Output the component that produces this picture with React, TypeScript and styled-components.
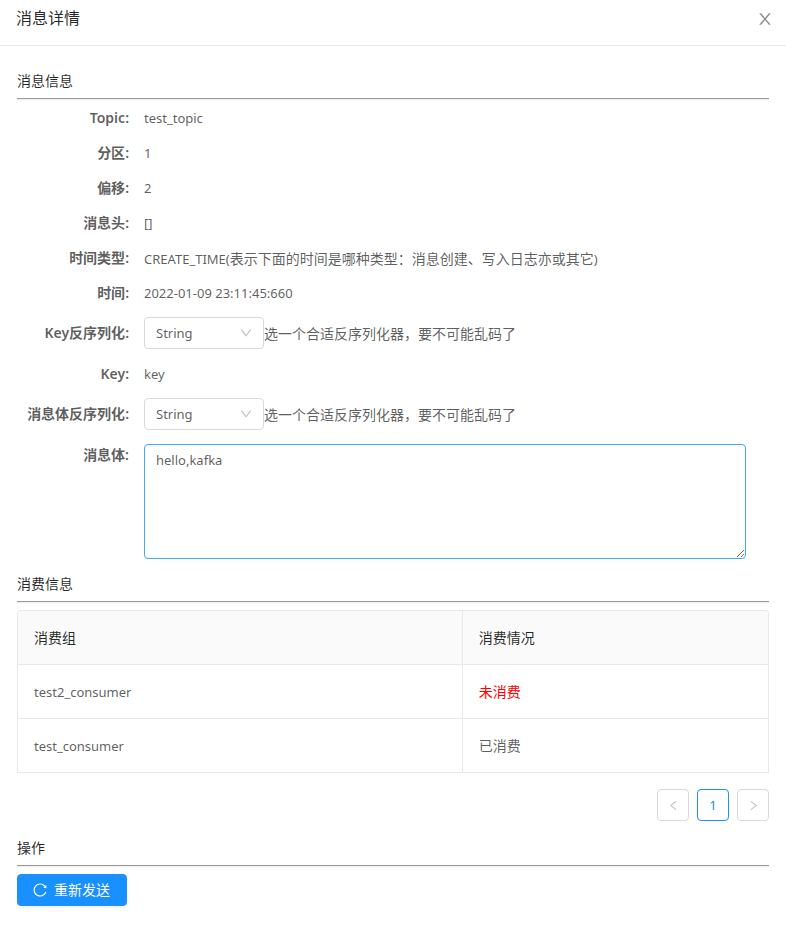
import React from "react";
import styled, { createGlobalStyle } from "styled-components";
import { AiOutlineDown, AiOutlineLeft, AiOutlineReload, AiOutlineRight } from "react-icons/ai";

const GlobalStyle = createGlobalStyle`
  *, *::before, *::after { box-sizing: border-box; }
  body {
    margin: 0;
    background: #fff;
    color: rgba(0, 0, 0, 0.65);
    font-family: "Noto Sans", "Noto Sans CJK SC", sans-serif;
    font-size: 14px;
    line-height: 22px;
  }
  button, select, textarea { font: inherit; color: inherit; margin: 0; }
`;

const Header = styled.header`
  display: flex;
  align-items: center;
  justify-content: space-between;
  padding: 6px 13px 15px 16px;
  border-bottom: 1px solid #e8e8e8;
`;

const Title = styled.h1`
  margin: 0;
  font-size: 16px;
  font-weight: 400;
  line-height: 24px;
  color: rgba(0, 0, 0, 0.85);
`;

const CloseButton = styled.button`
  display: flex;
  padding: 2px 0 0;
  border: 0;
  background: none;
  color: #8c8c8c;
  cursor: pointer;
`;

const Body = styled.main`
  display: flex;
  flex-direction: column;
  padding: 24px 17px 16px;
`;

const Section = styled.section<{ $gap: number }>`
  margin-bottom: ${(p) => p.$gap}px;
`;

const SectionTitle = styled.h2`
  margin: 0 0 6px;
  font-size: 14px;
  font-weight: 400;
  line-height: 22px;
  color: rgba(0, 0, 0, 0.85);
`;

const Rule = styled.hr<{ $gap: number }>`
  margin: 0 0 ${(p) => p.$gap}px;
  border: 0;
  border-top: 1px solid #9a9a9a;
  border-bottom: 1px solid #eee;
`;

const Field = styled.div`
  display: grid;
  grid-template-columns: 112px 1fr;
  column-gap: 15px;
  min-height: 35px;
  line-height: 33px;
`;

const ControlField = styled(Field)`
  min-height: 46px;
  padding: 6px 0 8px;
  line-height: 31px;
`;

const Label = styled.label`
  text-align: right;
  font-weight: 600;
  white-space: nowrap;
`;

const Value = styled.div`
  display: flex;
  align-items: center;
  min-width: 0;
`;

const Latin = styled.span`
  font-size: 13px;
`;

const SelectBox = styled.div`
  position: relative;
  width: 120px;
  flex: none;
  display: flex;
`;

const Select = styled.select`
  appearance: none;
  width: 100%;
  height: 32px;
  padding: 0 28px 2px 11px;
  border: 1px solid #d9d9d9;
  border-radius: 4px;
  background: #fff;
  font-size: 13px;
`;

const Arrow = styled(AiOutlineDown)`
  position: absolute;
  top: 9px;
  right: 11px;
  color: #bfbfbf;
  pointer-events: none;
`;

const AreaCell = styled.div`
  display: flex;
  padding: 6px 23px 0 0;
`;

const TextArea = styled.textarea`
  width: 100%;
  height: 115px;
  padding: 4px 11px;
  border: 1px solid #40a9ff;
  border-radius: 4px;
  outline: 0;
  font-size: 13px;
  line-height: 22px;
  resize: vertical;
`;

const Table = styled.table`
  width: 100%;
  table-layout: fixed;
  border-collapse: separate;
  border-spacing: 0;
  border: 1px solid #e8e8e8;
  border-bottom: 0;
  border-radius: 4px 4px 0 0;
  overflow: hidden;
`;

const cell = `
  height: 54px;
  padding: 0 16px;
  text-align: left;
  font-weight: 400;
  border-bottom: 1px solid #e8e8e8;
  &:first-child { width: 59.3%; border-right: 1px solid #e8e8e8; }
`;

const HeadCell = styled.th`
  ${cell}
  background: #fafafa;
  color: rgba(0, 0, 0, 0.85);
`;

const Cell = styled.td<{ $alert?: boolean }>`
  ${cell}
  color: ${(p) => (p.$alert ? "#f00" : "inherit")};
`;

const Pagination = styled.nav`
  display: flex;
  justify-content: flex-end;
  gap: 8px;
  margin-top: 16px;
`;

const PageButton = styled.button<{ $active?: boolean }>`
  display: flex;
  align-items: center;
  justify-content: center;
  width: 32px;
  height: 32px;
  padding: 0;
  border: 1px solid ${(p) => (p.$active ? "#1890ff" : "#d9d9d9")};
  border-radius: 4px;
  background: #fff;
  color: ${(p) => (p.$active ? "#1890ff" : "#bfbfbf")};
`;

const PrimaryButton = styled.button`
  display: inline-flex;
  align-items: center;
  gap: 6px;
  height: 32px;
  padding: 0 16px 0 14px;
  border: 1px solid #1890ff;
  border-radius: 4px;
  background: #1890ff;
  color: #fff;
  box-shadow: 0 2px 0 rgba(0, 0, 0, 0.045);
  cursor: pointer;
`;

const CloseIcon = () => (
  <svg width="16" height="16" viewBox="64 64 896 896" fill="currentColor" aria-hidden="true">
    <path d="M563.8 512l262.5-312.9c4.4-5.2.7-13.1-6.1-13.1h-79.8c-4.7 0-9.2 2.1-12.3 5.7L511.6 449.8 295.1 191.7c-3-3.6-7.5-5.7-12.3-5.7H203c-6.8 0-10.5 7.9-6.1 13.1L459.4 512 196.9 824.9A7.95 7.95 0 0 0 203 838h79.8c4.7 0 9.2-2.1 12.3-5.7l216.5-258.1 216.5 258.1c3 3.6 7.5 5.7 12.3 5.7h79.8c6.8 0 10.5-7.9 6.1-13.1L563.8 512z" />
  </svg>
);

const details = [
  { label: "Topic", value: <Latin>test_topic</Latin> },
  { label: "分区", value: <Latin>1</Latin> },
  { label: "偏移", value: <Latin>2</Latin> },
  { label: "消息头", value: <Latin>[]</Latin> },
  {
    label: "时间类型",
    value: (
      <span>
        <Latin>CREATE_TIME(</Latin>表示下面的时间是哪种类型：消息创建、写入日志亦或其它<Latin>)</Latin>
      </span>
    ),
  },
  { label: "时间", value: <Latin>2022-01-09 23:11:45:660</Latin> },
];

const consumers = [
  { group: "test2_consumer", status: "未消费", alert: true },
  { group: "test_consumer", status: "已消费", alert: false },
];

const TextField = ({ label, children }: { label: string; children: React.ReactNode }) => (
  <Field>
    <Label as="span">{label}:</Label>
    <Value>{children}</Value>
  </Field>
);

const SerializerField = ({ id, label }: { id: string; label: string }) => (
  <ControlField>
    <Label htmlFor={id}>{label}:</Label>
    <Value>
      <SelectBox>
        <Select id={id} defaultValue="String">
          <option>String</option>
          <option>Integer</option>
          <option>Long</option>
        </Select>
        <Arrow size={14} aria-hidden="true" />
      </SelectBox>
      <span>选一个合适反序列化器，要不可能乱码了</span>
    </Value>
  </ControlField>
);

export default function App() {
  return (
    <>
      <GlobalStyle />
      <Header>
        <Title>消息详情</Title>
        <CloseButton aria-label="关闭">
          <CloseIcon />
        </CloseButton>
      </Header>
      <Body>
        <Section $gap={14}>
          <SectionTitle>消息信息</SectionTitle>
          <Rule $gap={1} />
          {details.map((d) => (
            <TextField key={d.label} label={d.label}>
              {d.value}
            </TextField>
          ))}
          <SerializerField id="key-serializer" label="Key反序列化" />
          <TextField label="Key">
            <Latin>key</Latin>
          </TextField>
          <SerializerField id="body-serializer" label="消息体反序列化" />
          <Field>
            <Label htmlFor="message-body">消息体:</Label>
            <AreaCell>
              <TextArea id="message-body" defaultValue="hello,kafka" />
            </AreaCell>
          </Field>
        </Section>
        <Section $gap={16}>
          <SectionTitle>消费信息</SectionTitle>
          <Rule $gap={7} />
          <Table>
            <thead>
              <tr>
                <HeadCell scope="col">消费组</HeadCell>
                <HeadCell scope="col">消费情况</HeadCell>
              </tr>
            </thead>
            <tbody>
              {consumers.map((c) => (
                <tr key={c.group}>
                  <Cell>
                    <Latin>{c.group}</Latin>
                  </Cell>
                  <Cell $alert={c.alert}>{c.status}</Cell>
                </tr>
              ))}
            </tbody>
          </Table>
          <Pagination aria-label="分页">
            <PageButton disabled aria-label="上一页">
              <AiOutlineLeft size={13} />
            </PageButton>
            <PageButton $active aria-current="page">
              <Latin>1</Latin>
            </PageButton>
            <PageButton disabled aria-label="下一页">
              <AiOutlineRight size={13} />
            </PageButton>
          </Pagination>
        </Section>
        <Section $gap={0}>
          <SectionTitle>操作</SectionTitle>
          <Rule $gap={7} />
          <PrimaryButton>
            <AiOutlineReload size={16} aria-hidden="true" />
            重新发送
          </PrimaryButton>
        </Section>
      </Body>
    </>
  );
}
